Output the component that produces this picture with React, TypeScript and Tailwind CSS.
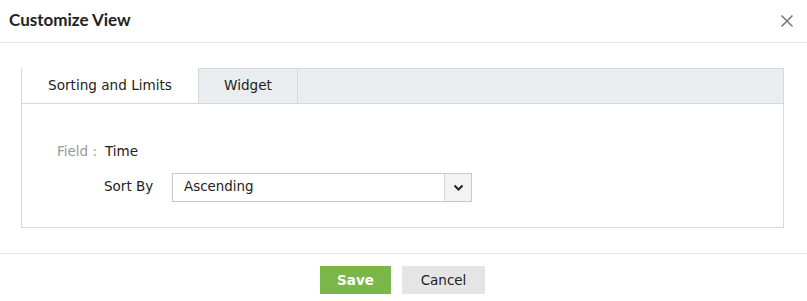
import React from "react";

const body = { fontFamily: '"DejaVu Sans", Verdana, sans-serif' };

const App: React.FC = () => {
  return (
    <div className="w-[807px] h-[301px] bg-white text-[#222]" style={body}>
      <div className="h-[43px] flex items-center justify-between pl-[9px] pr-[13px] border-b border-[#e3e3e3]">
        <div className="text-[17px] font-bold text-[#222] font-['Lato',sans-serif] -mt-[2px]">
          Customize View
        </div>
        <svg width="14" height="14" viewBox="0 0 14 14" className="-mt-[1px]">
          <path d="M1.5 1.5 L12.5 12.5 M12.5 1.5 L1.5 12.5" stroke="#7a7a7a" strokeWidth="1.6" />
        </svg>
      </div>

      <div className="px-[21px] pt-[25px]">
        <div className="w-[763px] h-[160px] border border-[#d5d8da]">
          <div className="flex h-[35px] bg-[#e9edef] border-b border-[#d5d8da]">
            <div className="w-[177px] h-[35px] bg-white border-r border-[#d5d8da] flex items-center justify-center text-[13.6px] -mt-[1px]">
              Sorting and Limits
            </div>
            <div className="w-[99px] border-r border-[#d5d8da] flex items-center justify-center text-[13.6px] -mt-[1px]">
              Widget
            </div>
          </div>

          <div className="pl-[35px] pt-[39px] text-[13.5px]">
            <div className="flex items-center h-[16px]">
              <span className="text-[#999]">Field :</span>
              <span className="ml-[8px]">Time</span>
            </div>
            <div className="flex items-center mt-[14px] ml-[47px]">
              <span className="w-[68px] -mt-[2px]">Sort By</span>
              <div className="w-[300px] h-[29px] border border-[#c9c9c9] flex">
                <div className="flex-1 flex items-center pl-[11px] text-[13.4px]">Ascending</div>
                <div className="w-[27px] bg-[#f3f3f3] border-l border-[#d5d5d5] flex items-center justify-center">
                  <svg width="11" height="8" viewBox="0 0 11 8">
                    <path d="M1.5 1.5 L5.5 5.5 L9.5 1.5" stroke="#222" strokeWidth="2" fill="none" />
                  </svg>
                </div>
              </div>
            </div>
          </div>
        </div>
      </div>

      <div className="mt-[25px] border-t border-[#e3e3e3] flex justify-center gap-[11px] pt-[12px] pr-[2px]">
        <button className="w-[71px] h-[28px] bg-[#7ab648] text-white text-[13.5px] font-bold">
          Save
        </button>
        <button className="w-[83px] h-[28px] bg-[#e5e5e5] text-[#222] text-[13.5px]">
          Cancel
        </button>
      </div>
    </div>
  );
};

export default App;
